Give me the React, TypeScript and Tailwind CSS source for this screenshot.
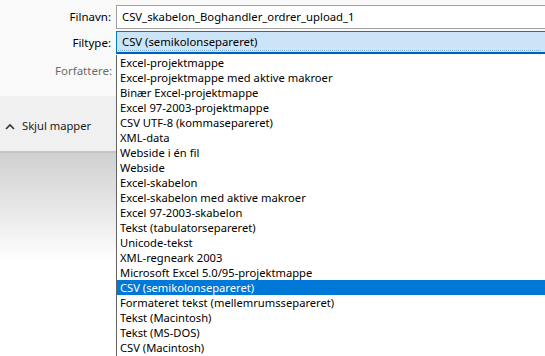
import React from "react";

// Gem som-dialog: filnavn, filtype med åben rulleliste.

const FILTYPER = [
  "Excel-projektmappe",
  "Excel-projektmappe med aktive makroer",
  "Binær Excel-projektmappe",
  "Excel 97-2003-projektmappe",
  "CSV UTF-8 (kommasepareret)",
  "XML-data",
  "Webside i én fil",
  "Webside",
  "Excel-skabelon",
  "Excel-skabelon med aktive makroer",
  "Excel 97-2003-skabelon",
  "Tekst (tabulatorsepareret)",
  "Unicode-tekst",
  "XML-regneark 2003",
  "Microsoft Excel 5.0/95-projektmappe",
  "CSV (semikolonsepareret)",
  "Formateret tekst (mellemrumssepareret)",
  "Tekst (Macintosh)",
  "Tekst (MS-DOS)",
  "CSV (Macintosh)",
];

const VALGT = "CSV (semikolonsepareret)";

export default function App() {
  return (
    <div
      className="relative h-[356px] w-[545px] overflow-hidden bg-white text-[11.2px] text-black"
      style={{ fontFamily: '"Segoe UI", "Noto Sans", sans-serif' }}
    >
      {/* felter */}
      <div className="flex h-[96px] flex-col bg-[#f9f9f9] pt-[5px]">
        <div className="flex h-[24px] items-center">
          <span className="w-[112px] pr-[1px] text-right text-[11.5px]">Filnavn:</span>
          <div className="ml-[4px] flex h-[24px] flex-1 items-center border border-r-0 border-[#a0a0a0] bg-white pl-[5px] text-[11.3px]">
            CSV_skabelon_Boghandler_ordrer_upload_1
          </div>
        </div>
        <div className="mt-[2px] flex h-[23px] items-center">
          <span className="w-[112px] pr-[1px] text-right text-[11.5px]">Filtype:</span>
          <div className="relative ml-[4px] flex h-[23px] flex-1 items-center border border-r-0 border-b-2 border-[#0078d7] border-b-[#005fb8] bg-[#cce4f7] pl-[5px] text-[11.3px]">
            {VALGT}
            <div className="absolute bottom-[1px] left-[1px] right-[4px] border-b border-dotted border-[#7fb4e6]" />
          </div>
        </div>
        <div className="mt-[7px] flex h-[20px] items-center">
          <span className="w-[112px] text-right text-[11.5px] text-[#6d6d6d]">Forfattere:</span>
        </div>
      </div>

      {/* skjul mapper */}
      <div className="flex h-[55px] items-start bg-[#f0f0f0] pl-[5px] pt-[22px]">
        <svg width="10" height="8" viewBox="0 0 10 8" className="mt-[5px]">
          <path d="M1 6 L5 2 L9 6" fill="none" stroke="#333" strokeWidth="1.6" />
        </svg>
        <span className="ml-[7px] text-[11.2px] text-[#1a1a1a]">Skjul mapper</span>
      </div>

      <div className="h-[2px] bg-[#c4c4c4]" />
      <div className="h-[110px] bg-gradient-to-b from-[#d0d0d0] to-white" />

      {/* rulleliste */}
      <div className="absolute bottom-0 left-[116px] right-0 top-[55px] border-l border-[#646464] bg-white">
        {FILTYPER.map((t) => (
          <div
            key={t}
            className={
              "h-[15px] pl-[3px] leading-[15px] " +
              (t === VALGT ? "bg-[#0078d7] text-white" : "")
            }
          >
            {t}
          </div>
        ))}
      </div>
    </div>
  );
}
